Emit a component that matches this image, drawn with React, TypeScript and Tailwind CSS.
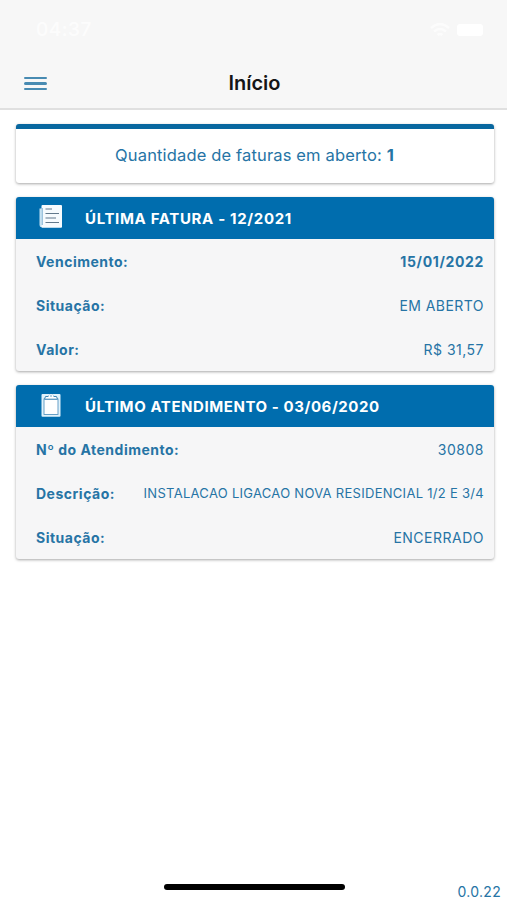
import type { ReactNode } from "react";

function NewspaperIcon() {
  return (
    <svg width="24" height="25" viewBox="0 0 24 25" fill="none">
      <path d="M0.500 4.500V21q0 2.200 2.200 2.200h1V4.500z" fill="#c5e2f2" />
      <rect x="2.500" y="1" width="20.500" height="22.800" rx="1" fill="#f6fbfe" />
      <path d="M3.200 4V21" stroke="#76acd0" strokeWidth="1" />
      <path d="M6.500 5H13M6.500 9.500H20M6.500 14H17M6.500 18.500H20" stroke="#61798c" strokeWidth="1.200" />
    </svg>
  );
}

function ClipboardIcon() {
  return (
    <svg width="20" height="25" viewBox="0 0 20 25" fill="none">
      <rect x="0.500" y="2" width="19" height="22.700" rx="1" fill="#e0f2fb" />
      <rect x="3" y="7" width="14" height="15.500" fill="#fff" stroke="#5796c0" strokeWidth="0.900" />
      <path d="M3.500 7.200L4.500 4.500h3a2.600 2.600 0 0 1 5 0h3l1 2.700z" fill="#fff" stroke="#3e85b4" strokeWidth="1" />
      <path d="M7.800 3.700a2.300 2.300 0 0 1 4.400 0l.6 2.300H7.200z" fill="#fff" />
      <circle cx="10" cy="4" r="0.800" fill="#5796c0" />
    </svg>
  );
}

function Row({ label, children }: { label: string; children: ReactNode }) {
  return (
    <div className="flex h-[43.800px] items-center justify-between whitespace-nowrap">
      <span className="text-[14px] font-bold tracking-[0.500px]">{label}</span>
      {children}
    </div>
  );
}

function Card({ icon, title, children }: { icon: ReactNode; title: ReactNode; children: ReactNode }) {
  return (
    <section className="h-[174px] overflow-hidden rounded-[3px] bg-[#f6f6f7] shadow-[0_1px_3px_rgba(0,0,0,0.350)]">
      <h2 className="flex h-[42px] items-center bg-[#006dae] pl-[22px] text-white">
        <span className="-mt-[3px] flex w-[25px] justify-center">{icon}</span>
        <span className="ml-[22px] whitespace-nowrap pt-[2px] text-[15px] font-bold">{title}</span>
      </h2>
      <div className="pl-5 pr-[10px] pt-px">{children}</div>
    </section>
  );
}

export default function App() {
  return (
    <div className="flex h-[900px] w-[507px] flex-col overflow-hidden bg-white font-['Inter','Liberation_Sans',sans-serif] text-[#2674a5]">
      <header className="h-[110px] shrink-0 border-b-2 border-[#e0e0e0] bg-[#f7f7f7]">
        <div className="flex h-[60px] items-center justify-between pl-[36px] pr-[24px] text-white">
          <span className="text-[19px] font-medium tracking-[0.500px] text-white/70">04:37</span>
          <div className="flex items-center gap-[7px]">
            <svg width="20" height="15" viewBox="0 0 20 15" fill="none" stroke="currentColor" strokeWidth="2.500" opacity="0.700">
              <path d="M1 5q9-8 18 0M4 8.500q6-5 12 0M7.500 12q2.500-2 5 0" />
            </svg>
            <span className="h-3 w-[26px] rounded-[3px] bg-white" />
          </div>
        </div>
        <div className="grid h-[47px] grid-cols-[1fr_auto_1fr] items-center">
          <button aria-label="Menu" className="ml-[24px] flex w-[23px] flex-col gap-[3px]">
            <span className="h-[2.500px] w-full rounded-full bg-[#488bb2]" />
            <span className="h-[2.500px] w-full rounded-full bg-[#488bb2]" />
            <span className="h-[2.500px] w-full rounded-full bg-[#488bb2]" />
          </button>
          <h1 className="pb-[2px] pl-[2px] text-[20px] font-semibold text-[#151515]">Início</h1>
        </div>
      </header>
      <main className="flex flex-1 flex-col gap-[14px] pl-4 pr-[13px] pt-[14px]">
        <section className="flex h-[59px] items-center justify-center overflow-hidden rounded-[3px] border-t-[5px] border-[#08679f] bg-white pb-px pr-px text-[16.500px] tracking-[0.150px] shadow-[0_1px_3px_rgba(0,0,0,0.350)]">
          <p className="whitespace-nowrap">Quantidade de faturas em aberto: <strong>1</strong></p>
        </section>
        <Card icon={<NewspaperIcon />} title={<span className="tracking-[0.660px]">ÚLTIMA FATURA - 12/2021</span>}>
          <Row label="Vencimento:"><span className="text-[14px] font-bold tracking-[0.650px]">15/01/2022</span></Row>
          <Row label="Situação:"><span className="text-[14px] tracking-[0.450px]">EM ABERTO</span></Row>
          <Row label="Valor:"><span className="text-[14px] tracking-[0.500px]">R$ 31,57</span></Row>
        </Card>
        <Card icon={<ClipboardIcon />} title={<span className="tracking-[0.570px]">ÚLTIMO ATENDIMENTO - 03/06/2020</span>}>
          <Row label="Nº do Atendimento:"><span className="text-[14px] tracking-[0.500px]">30808</span></Row>
          <Row label="Descrição:"><span className="text-[13px] tracking-[0.290px]">INSTALACAO LIGACAO NOVA RESIDENCIAL 1/2 E 3/4</span></Row>
          <Row label="Situação:"><span className="text-[14px] tracking-[0.500px]">ENCERRADO</span></Row>
        </Card>
      </main>
      <footer className="grid h-[28px] grid-cols-[1fr_180px_1fr] pr-[6px]">
        <span className="col-start-2 ml-[3px] mt-[12px] h-[6px] w-[181px] rounded-full bg-black" />
        <span className="mt-[10px] text-right text-[14px] leading-[20px] tracking-[0.300px]">0.0.22</span>
      </footer>
    </div>
  );
}
